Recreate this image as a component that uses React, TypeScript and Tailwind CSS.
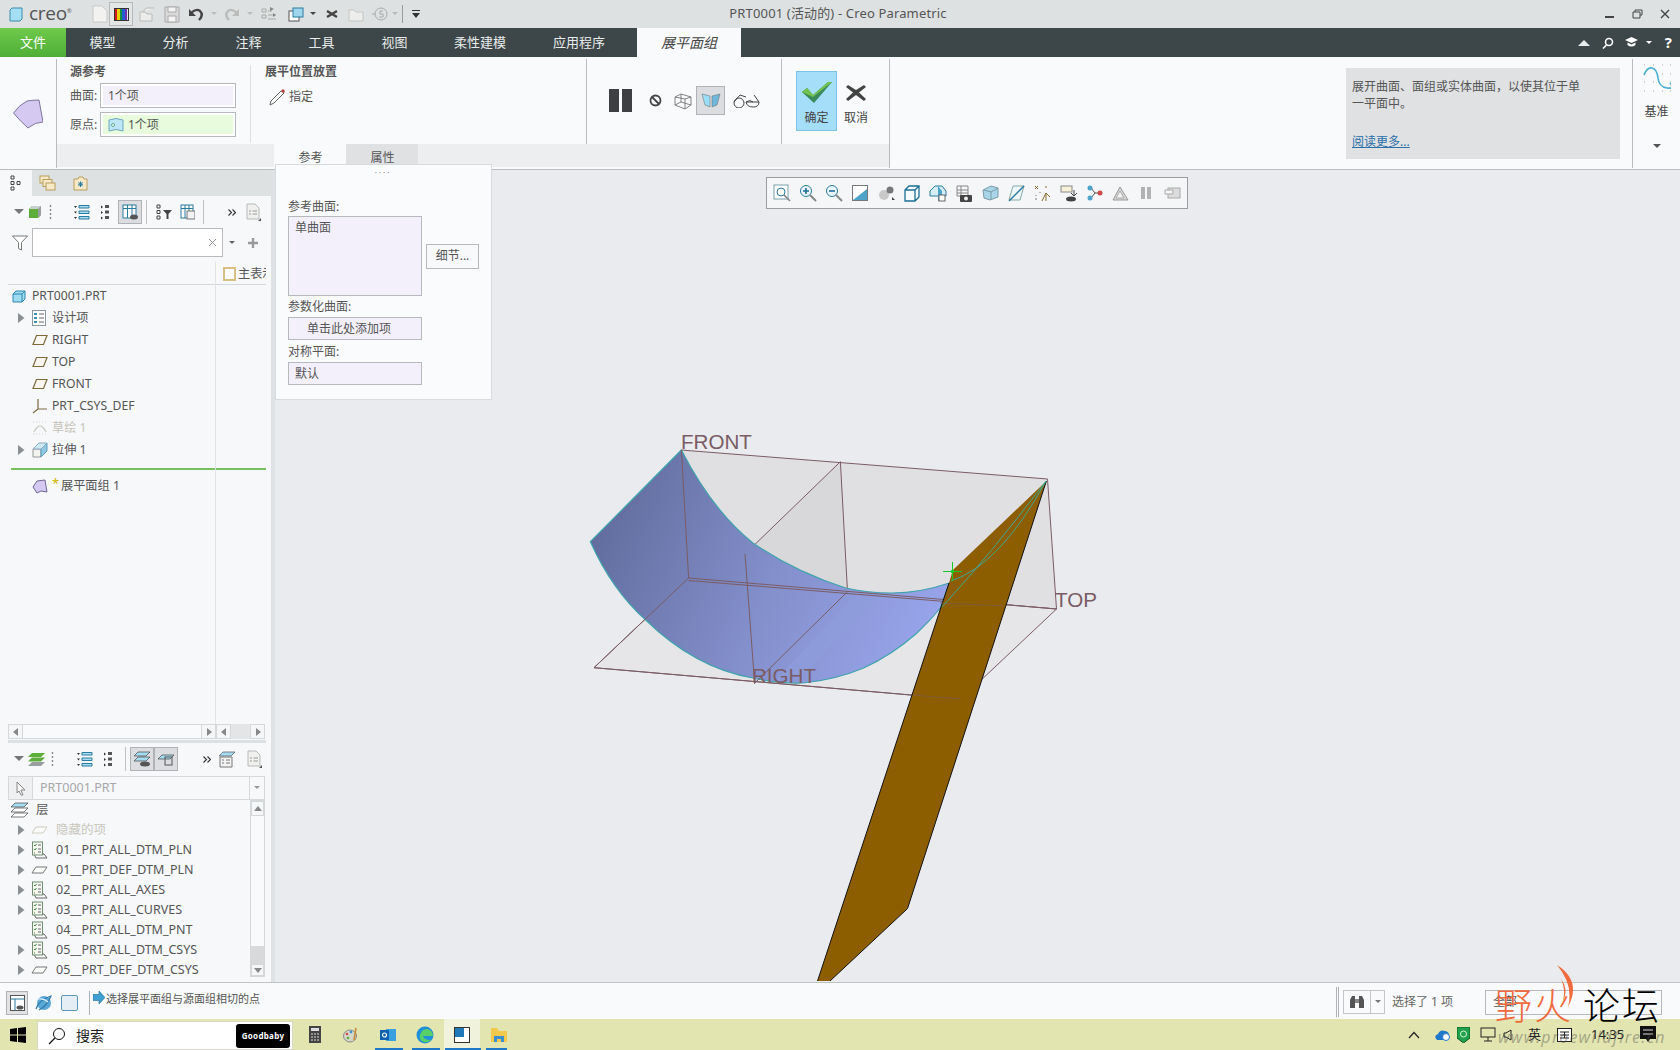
import type { ReactNode } from 'react';

const S = ({ w = 16, h = 16, children, className = '' }: { w?: number; h?: number; children?: ReactNode; className?: string }) => (
  <svg width={w} height={h} viewBox={`0 0 ${w} ${h}`} fill="none" className={`shrink-0 block ${className}`}>
    {children}
  </svg>
);

const Caret = ({ color = '#666', size = 4 }: { color?: string; size?: number }) => (
  <S w={size * 2} h={size + 1}>
    <path d={`M0 0H${size * 2}L${size} ${size}Z`} fill={color} />
  </S>
);

const Arrow = () => (
  <S w={8} h={12}>
    <path d="M1 1V11L7.5 6Z" fill="#8b8f92" />
  </S>
);

const PlaneIcon = () => (
  <S w={16} h={14}>
    <path d="M4.5 2.5H15L11.5 11.5H1Z" fill="#f8f6ef" stroke="#7d6a3c" strokeWidth="1.2" />
  </S>
);

const LayerDoc = () => (
  <S w={17} h={18}>
    <path d="M3 13H13L16 17H5Z" fill="#fff" stroke="#666" />
    <rect x="1.5" y="1" width="10" height="13" fill="#f7f7ef" stroke="#6f8d70" />
    <path d="M3 4l1 1 1.5-2M3 8l1 1 1.5-2M3 12h1" stroke="#3b8a4b" />
    <path d="M7 4h3M7 8h3M7 11h3" stroke="#667" />
  </S>
);

const LayerFlat = ({ faded = false }: { faded?: boolean }) => (
  <S w={17} h={8}>
    <path d="M5 1H16L12 7H1Z" fill="#fdfdfb" stroke={faded ? '#cfccbe' : '#777'} />
  </S>
);

const ListLines = () => (
  <S w={16} h={16}>
    <path d="M5 1.5H15V4H5ZM5 7H15V9.5H5ZM5 12.5H15V15H5Z" fill="#a6dcf2" stroke="#2a7ba0" />
    <path d="M0 2H3L1.5 4ZM0 7.5H3L1.5 9.5ZM0 13H3L1.5 15Z" fill="#333" />
  </S>
);

const ListDots = () => (
  <S w={9} h={16}>
    <path d="M4 1h4v3H4zM4 6.5h4v3H4zM4 12h4v3H4z" fill="#555" />
    <path d="M0 1.5L2 3 0 4.5ZM0 7L2 8.5 0 10ZM0 12.5L2 14 0 15.5Z" fill="#333" />
  </S>
);

const DocIcon = () => (
  <S w={15} h={18}>
    <path d="M1 1H9L13 5V16H1Z" fill="#f0f0ee" stroke="#b8b8b8" />
    <path d="M3 8h2M6.5 8H11M3 11h2M6.5 11H11" stroke="#9a9a9a" />
    <path d="M15 15V18H12Z" fill="#555" />
  </S>
);

const Chevrons = () => (
  <S w={8} h={7}>
    <path d="M0.5 0.5l3 3-3 3M4.5 0.5l3 3-3 3" stroke="#333" strokeWidth="1.1" />
  </S>
);

const CubeBlue = () => (
  <S w={14} h={13}>
    <path d="M1 4L4 1H13V9L10 12H1Z" fill="#9fdcf2" stroke="#2c86ad" />
    <path d="M1 4H10V12M10 4L13 1" stroke="#2c86ad" />
  </S>
);

const PurplePatch = () => (
  <svg width={30} height={30} viewBox="0 0 30 30" className="shrink-0 block">
    <path d="M0.5 14Q6 6 14 2Q20 1 26 1Q28 12 30 23Q22 23 15 29Q7 22 0.5 14Z" fill="#d5c9f2" stroke="#7e7699" strokeWidth="1" />
  </svg>
);

const QuickBar = () => (
  <div className="flex items-center">
    <S w={16} h={18} className="ml-[21px]">
      <path d="M1 1H10L15 6V17H1Z" fill="#f2f2f0" stroke="#c9c9c9" />
    </S>
    <div className="ml-[1px] w-[24px] h-[24px] border border-[#b6b9ba] bg-[#e4e6e6] flex items-center justify-center">
      <div className="w-[15px] h-[13px] flex border border-[#333]">
        <div className="flex-1 bg-[#d01818]" />
        <div className="flex-1 bg-[#e6d000]" />
        <div className="flex-1 bg-[#109040]" />
        <div className="flex-1 bg-[#2060d0]" />
        <div className="flex-1 bg-[#7030b0]" />
      </div>
    </div>
    <S w={17} h={17} className="ml-[6px]">
      <path d="M1 6H6L8 8H13V15H1ZM4 6L7 2H15" fill="#ececea" stroke="#bbb" />
    </S>
    <S w={16} h={17} className="ml-[8px]">
      <path d="M1 1H15V16H1Z" fill="#d9d9d9" stroke="#aaa" />
      <path d="M4 1H12V6H4ZM4 10H12V16H4Z" fill="#f4f4f4" stroke="#aaa" />
    </S>
    <S w={16} h={14} className="ml-[8px]">
      <path d="M3 6Q8 1 12 4Q16 8 11 13" stroke="#444" strokeWidth="2.4" />
      <path d="M1 2V9H8Z" fill="#444" />
    </S>
    <div className="ml-[7px]"><Caret color="#bbb" size={3} /></div>
    <S w={16} h={14} className="ml-[7px]">
      <path d="M13 6Q8 1 4 4Q0 8 5 13" stroke="#bbb" strokeWidth="2.4" />
      <path d="M15 2V9H8Z" fill="#bbb" />
    </S>
    <div className="ml-[7px]"><Caret color="#bbb" size={3} /></div>
    <S w={16} h={16} className="ml-[8px]">
      <path d="M1 3h4v3H1zM1 9h4v3H1zM7 13h8M7 9h8M7 5h4" stroke="#aaa" />
      <path d="M9 1l4 2-4 2zM12 7l3 2-3 2z" fill="#888" />
    </S>
    <S w={16} h={16} className="ml-[11px]">
      <rect x="1" y="5" width="10" height="10" fill="#fff" stroke="#555" />
      <rect x="5" y="2" width="10" height="9" fill="#9fd6ee" stroke="#2a7ba0" />
    </S>
    <div className="ml-[6px]"><Caret color="#444" size={3} /></div>
    <S w={12} h={12} className="ml-[10px]">
      <path d="M1 3L11 9M1 9L11 3" stroke="#444" strokeWidth="2.4" />
    </S>
    <S w={16} h={15} className="ml-[10px]">
      <path d="M1 3H6L8 5H15V14H1Z" fill="#ededeb" stroke="#c6c6c6" />
    </S>
    <S w={16} h={16} className="ml-[8px]">
      <path d="M0 8h3" stroke="#aaa" />
      <circle cx="9" cy="8" r="6" stroke="#aaa" />
      <path d="M11 5H8V8H11V11H7" stroke="#aaa" />
    </S>
    <div className="ml-[4px]"><Caret color="#bbb" size={3} /></div>
    <div className="ml-[4px] w-px h-[18px] bg-[#9a9d9f]" />
    <S w={8} h={8} className="ml-[9px]">
      <path d="M0 0H8V1H0ZM0 3H8L4 8Z" fill="#333" />
    </S>
  </div>
);

const TitleBar = () => (
  <div className="h-[28px] bg-[#dde1e1] grid grid-cols-[1fr_auto_1fr] items-center">
    <div className="flex items-center">
      <S w={14} h={15} className="ml-[9px]">
        <path d="M1 3L3 1H13V12L11 14H1Z" fill="#a5dff3" stroke="#3a8cb0" />
      </S>
      <span className="ml-[6px] w-[42px] text-[19px] leading-none text-[#555] tracking-[-0.3px] font-['Open_Sans',sans-serif] mt-[-2px]">
        creo<span className="text-[6px] align-super">®</span>
      </span>
      <QuickBar />
    </div>
    <div className="text-[13px] text-[#555] mr-[4px] tracking-[0.15px]">PRT0001 (活动的) - Creo Parametric</div>
    <div className="flex justify-end items-center pr-[10px] gap-[17px]">
      <S w={10} h={10}><path d="M0 8H9" stroke="#444" strokeWidth="2" /></S>
      <S w={11} h={10}>
        <path d="M3 3V1H10V6H8M1 3H8V9H1Z" stroke="#444" />
      </S>
      <S w={10} h={10}><path d="M1 1L9 9M9 1L1 9" stroke="#444" strokeWidth="1.4" /></S>
    </div>
  </div>
);

const NavBar = () => (
  <div className="h-[29px] bg-[#3d4648] flex text-[13px] text-[#e8ecec] leading-[29px]">
    <div className="w-[66px] text-center bg-gradient-to-b from-[#6fca4a] to-[#4fae38] text-white">文件</div>
    {['模型', '分析', '注释', '工具', '视图'].map((t) => (
      <div key={t} className="w-[73px] text-center">{t}</div>
    ))}
    <div className="w-[98px] text-center">柔性建模</div>
    <div className="w-[108px] pl-[24px]">应用程序</div>
    <div className="w-[104px] text-center bg-[#f8fafb] text-[#444] italic text-[14px]">展平面组</div>
    <div className="ml-auto flex items-center pr-[8px]">
      <S w={12} h={7}><path d="M0 7L6 1L12 7Z" fill="#e8ecec" /></S>
      <S w={12} h={12} className="ml-[12px]">
        <circle cx="7" cy="5" r="3.5" stroke="#fff" strokeWidth="1.6" />
        <path d="M4.5 8L1 11.5" stroke="#fff" strokeWidth="1.6" />
      </S>
      <S w={13} h={11} className="ml-[11px]">
        <path d="M0 3L6.5 0L13 3L6.5 6Z" fill="#fff" />
        <path d="M2.5 5.5V8Q6.5 11 10.5 8V5.5L6.5 7.5Z" fill="#fff" />
      </S>
      <div className="ml-[8px]"><Caret color="#fff" size={3} /></div>
      <span className="ml-[13px] text-[15px] font-bold text-white">?</span>
    </div>
  </div>
);

const FieldRow = ({ label, bg, children }: { label: string; bg: string; children: ReactNode }) => (
  <div className="flex items-center h-[25px]">
    <span className="w-[30px] text-[12px] text-[#555]">{label}</span>
    <div className="w-[136px] h-[25px] border border-[#b7babc] p-[2px] bg-white">
      <div className={`h-full flex items-center px-[5px] text-[12px] text-[#555] ${bg}`}>{children}</div>
    </div>
  </div>
);

const Ribbon = () => (
  <div className="h-[113px] bg-[#f8fafb] border-b border-[#b9bdbf] flex">
    <div className="w-[56px] shrink-0 flex items-center justify-center pt-[1px]">
      <PurplePatch />
    </div>
    <div className="w-[834px] shrink-0 border-x border-[#b9bdbf] mt-[2px] mb-[1px] flex flex-col">
      <div className="h-[86px] flex">
        <div className="w-[193px] pl-[13px] pt-[5px]">
          <div className="text-[12px] font-bold text-[#555] leading-[16px]">源参考</div>
          <div className="mt-[3px] flex flex-col gap-[4px]">
            <FieldRow label="曲面:" bg="bg-[#f3f0fc]">1个项</FieldRow>
            <FieldRow label="原点:" bg="bg-[#e8fbdc]">
              <S w={16} h={15} className="mr-[4px]">
                <path d="M1 3Q8 0 15 3V14Q8 11 1 14Z" fill="#bfe6f7" stroke="#6fa8c0" />
                <circle cx="5" cy="8" r="1.5" fill="#fff" stroke="#5a8" />
              </S>
              1个项
            </FieldRow>
          </div>
        </div>
        <div className="w-[336px] border-l border-[#dde0e2] h-[78px] mt-[6px] pl-[14px]">
          <div className="text-[12px] font-bold text-[#555] leading-[16px] mt-[-1px]">展平位置放置</div>
          <div className="flex items-center mt-[8px] ml-[4px] text-[12px] text-[#555]">
            <S w={17} h={17}>
              <path d="M2 12L12 2L15 4L5 14L1 16Z" fill="#fff" stroke="#666" />
              <path d="M12 2L15 4L16 2L14 0Z" fill="#b3413c" />
            </S>
            <span className="ml-[3px]">指定</span>
          </div>
        </div>
        <div className="w-[195px] border-l border-[#b9bdbf] flex items-center pb-[2px]">
          <div className="ml-[22px] flex gap-[3px]">
            <div className="w-[10px] h-[23px] bg-[#3d3f42]" />
            <div className="w-[10px] h-[23px] bg-[#3d3f42]" />
          </div>
          <S w={13} h={13} className="ml-[17px]">
            <circle cx="6.5" cy="6.5" r="5" stroke="#444" strokeWidth="1.8" />
            <path d="M3 3L10 10" stroke="#444" strokeWidth="1.8" />
          </S>
          <S w={20} h={18} className="ml-[11px]">
            <path d="M2 5L8 2L18 5V13L12 17L2 13ZM8 2V10L2 13M8 10L18 13M12 7V17M2 5L12 7L18 5" stroke="#777" strokeWidth="0.9" />
          </S>
          <div className="ml-[3px] w-[29px] h-[29px] bg-[#dcdde0] border border-[#b0b2b5] flex items-center justify-center">
            <S w={20} h={15}>
              <path d="M1 1L9 3V14L4 12Z" fill="#9bdcf6" stroke="#666" strokeWidth="0.5" />
              <path d="M11 3L19 1L16 12L11 14Z" fill="#6fb8dc" stroke="#666" strokeWidth="0.5" />
            </S>
          </div>
          <S w={28} h={15} className="ml-[7px]">
            <circle cx="7" cy="10" r="5" stroke="#444" />
            <path d="M2 9L8 2L14 4M14 9Q18 6 21 9M22 2L27 9" stroke="#444" />
            <path d="M14 9H27Q27 14 21 14Q15 14 14 9Z" stroke="#444" />
          </S>
        </div>
        <div className="w-[108px] border-l border-[#b9bdbf] flex">
          <div className="ml-[14px] mt-[12px] w-[41px] h-[60px] bg-[#a5def9] border border-[#7cc4e6] flex flex-col items-center text-[12px] text-[#444]">
            <S w={30} h={23} className="mt-[9px]">
              <path d="M0 11L5 7L11 14L26 1L30 1L12 22Z" fill="#3a8a5c" />
              <path d="M0 11L5 7L11 14L26 1L30 1L11 16Z" fill="#72c24f" />
            </S>
            <span className="mt-[6px] leading-[16px]">确定</span>
          </div>
          <div className="ml-[6px] mt-[12px] flex flex-col items-center text-[12px] text-[#444] w-[26px]">
            <S w={20} h={17} className="mt-[13px]">
              <path d="M2 1L10 6L18 1L20 3L13 8.5L20 15L18 17L10 11L2 17L0 15L7 8.5L0 3Z" fill="#444" />
            </S>
            <span className="mt-[9px] leading-[16px]">取消</span>
          </div>
        </div>
      </div>
      <div className="mt-auto h-[23px] bg-[#eceef0] flex pl-[217px] text-[12px] text-[#555] leading-[28px] mb-[1px]">
        <div className="w-[72px] bg-[#f8fafb] text-center pl-[1px]">参考</div>
        <div className="w-[72px] bg-[#dfe1e3] text-center pl-[1px]">属性</div>
      </div>
    </div>
    <div className="w-[742px] shrink-0 flex justify-end">
      <div className="w-[274px] h-[91px] mt-[11px] mr-[12px] bg-[#dfe1e3] px-[6px] pt-[10px] text-[12px] leading-[17px] text-[#555]">
        <div className="w-[232px]">展开曲面、面组或实体曲面，以使其位于单一平面中。</div>
        <div className="mt-[21px] text-[#2a6fa8] underline">阅读更多...</div>
      </div>
    </div>
    <div className="flex-1 border-l border-[#b9bdbf] mt-[2px] mb-[1px] flex flex-col items-center text-[12px] text-[#444]">
      <S w={28} h={28} className="mt-[5px]">
        <path d="M1 1h.5M10 1h.5M19 1h.5M27 1h.5M1 10h.5M19 10h.5M27 10h.5M1 18h.5M10 18h.5M27 18h.5M1 27h.5M10 27h.5M19 27h.5M27 27h.5" stroke="#555" />
        <path d="M1 11Q4 3 9 4T15 14T24 24T27 19" stroke="#4ab0d8" strokeWidth="1.6" />
      </S>
      <span className="mt-[12px] leading-[16px]">基准</span>
      <div className="mt-[24px]"><Caret color="#555" /></div>
    </div>
  </div>
);

const ToolBtn = ({ children, active = false }: { children: ReactNode; active?: boolean }) => (
  <div className={`w-[24px] h-[24px] flex items-center justify-center ${active ? 'bg-[#dcdde0] border border-[#b0b2b5]' : ''}`}>{children}</div>
);

const treeRows: { text: string; arrow?: boolean; icon: ReactNode; faded?: boolean }[] = [
  {
    text: '设计项',
    arrow: true,
    icon: (
      <S w={14} h={16}>
        <rect x="0.5" y="0.5" width="13" height="15" fill="#fff" stroke="#8a9aa0" />
        <path d="M2 3h3v2H2zM2 7h3v2H2zM2 11h3v2H2z" fill="#3a8fb8" />
        <path d="M7 4h5M7 8h5M7 12h5" stroke="#666" />
      </S>
    ),
  },
  { text: 'RIGHT', icon: <PlaneIcon /> },
  { text: 'TOP', icon: <PlaneIcon /> },
  { text: 'FRONT', icon: <PlaneIcon /> },
  {
    text: 'PRT_CSYS_DEF',
    icon: (
      <S w={16} h={16}>
        <path d="M6 1V11L1 15M6 11H15" stroke="#7d6a3c" strokeWidth="1.2" />
      </S>
    ),
  },
  {
    text: '草绘 1',
    faded: true,
    icon: (
      <S w={16} h={14}>
        <path d="M2 11Q8 -1 14 11" stroke="#c6c4b8" strokeWidth="1.2" />
        <path d="M1 1h14M1 13h14" stroke="#d8d6cc" strokeDasharray="1 2" />
      </S>
    ),
  },
  {
    text: '拉伸 1',
    arrow: true,
    icon: (
      <S w={16} h={16}>
        <path d="M1 7H9V15H1Z" fill="#f3f3f0" stroke="#999" />
        <path d="M9 7L15 1V9L9 15Z" fill="#8fc8e0" stroke="#5a9ab8" />
        <path d="M1 7L7 1H15L9 7Z" fill="#cfe9f5" stroke="#8ab" />
      </S>
    ),
  },
];

const layerRows: { text: string; arrow: boolean; flat?: boolean; faded?: boolean }[] = [
  { text: '隐藏的项', arrow: true, flat: true, faded: true },
  { text: '01__PRT_ALL_DTM_PLN', arrow: true },
  { text: '01__PRT_DEF_DTM_PLN', arrow: true, flat: true },
  { text: '02__PRT_ALL_AXES', arrow: true },
  { text: '03__PRT_ALL_CURVES', arrow: true },
  { text: '04__PRT_ALL_DTM_PNT', arrow: false },
  { text: '05__PRT_ALL_DTM_CSYS', arrow: true },
  { text: '05__PRT_DEF_DTM_CSYS', arrow: true, flat: true },
];

const ScrollBtn = ({ dir, w = 15 }: { dir: 'l' | 'r' | 'u' | 'd'; w?: number }) => (
  <div style={{ width: w }} className="h-full flex items-center justify-center bg-[#f4f6f7] border border-[#d5d8da]">
    <S w={8} h={8}>
      {dir === 'l' && <path d="M6 0V8L1 4Z" fill="#888" />}
      {dir === 'r' && <path d="M2 0V8L7 4Z" fill="#888" />}
      {dir === 'u' && <path d="M0 6H8L4 1Z" fill="#888" />}
      {dir === 'd' && <path d="M0 2H8L4 7Z" fill="#888" />}
    </S>
  </div>
);

const LeftPanel = () => (
  <div className="w-[271px] shrink-0 bg-[#f6f8fa] flex flex-col text-[12.5px] text-[#555]">
    <div className="h-[26px] bg-[#dde1e1] flex items-center">
      <div className="w-[32px] h-full bg-[#f6f8fa] flex items-center justify-center">
        <S w={12} h={16}>
          <path d="M1 1h3v3H1zM1 6.5h3v3H1zM1 12h3v3H1zM7 6.5h3v3H7z" stroke="#444" />
        </S>
      </div>
      <S w={17} h={16} className="ml-[7px]">
        <rect x="1" y="1" width="9" height="7" fill="#f6e9c8" stroke="#b99d5a" />
        <rect x="4" y="4.5" width="9" height="7" fill="#f6e9c8" stroke="#b99d5a" />
        <rect x="7" y="8" width="9" height="7" fill="#f6e9c8" stroke="#b99d5a" />
      </S>
      <S w={15} h={15} className="ml-[17px]">
        <path d="M1 3H5L6 1H10L11 3H14V14H1Z" fill="#f6e9c8" stroke="#b99d5a" />
        <path d="M7.5 5.5V11M5 8.2H10M5.5 6.2L9.5 10.2M9.5 6.2L5.5 10.2" stroke="#2a7ba0" />
      </S>
    </div>

    <div className="mt-[4px] h-[24px] flex items-center pl-[14px]">
      <Caret color="#777" size={5} />
      <S w={14} h={14} className="ml-[4px]">
        <path d="M1 4L4 1H13V10L10 13H1Z" fill="#5cad3a" />
        <path d="M10 4V13L13 10V1Z" fill="#9a9d9f" />
        <path d="M1 4H10L13 1H4Z" fill="#c9d0d0" />
      </S>
      <S w={3} h={14} className="ml-[7px]"><path d="M1.5 0V14" stroke="#888" strokeDasharray="2 2" strokeWidth="1.4" /></S>
      <div className="ml-[22px]"><ListLines /></div>
      <div className="ml-[11px]"><ListDots /></div>
      <div className="ml-[8px]">
        <ToolBtn active>
          <S w={16} h={16}>
            <rect x="1" y="1" width="13" height="13" fill="#fff" stroke="#2a7ba0" />
            <path d="M1 4.5H14M5.5 1V14M10 1V14" stroke="#2a7ba0" />
            <ellipse cx="12" cy="13" rx="4" ry="2.5" fill="#555" />
          </S>
        </ToolBtn>
      </div>
      <div className="ml-[4px] w-px h-[24px] bg-[#bfc2c4]" />
      <S w={16} h={16} className="ml-[9px]">
        <path d="M1 1h3v3H1zM1 6.5h3v3H1zM1 12h3v3H1z" stroke="#444" />
        <path d="M7 6H16L12.5 10V15H10.5V10Z" fill="#444" />
      </S>
      <S w={15} h={16} className="ml-[8px]">
        <rect x="1" y="1" width="12" height="13" fill="#fff" stroke="#2a7ba0" />
        <path d="M1 4.5H13M5 1V14M9 1V8" stroke="#2a7ba0" />
        <rect x="7" y="7" width="8" height="8" fill="#f2f2f2" stroke="#777" />
      </S>
      <div className="ml-[8px] w-px h-[24px] bg-[#bfc2c4]" />
      <div className="ml-[24px]"><Chevrons /></div>
      <div className="ml-[10px]"><DocIcon /></div>
    </div>

    <div className="mt-[4px] h-[29px] flex items-center pl-[12px]">
      <S w={16} h={16}>
        <path d="M0.5 1H15.5L9.5 7.5V15L6.5 13.5V7.5Z" fill="#fff" stroke="#777" />
      </S>
      <div className="ml-[4px] w-[191px] h-[29px] bg-white border border-[#b7babc] flex items-center justify-end pr-[5px]">
        <S w={9} h={9}><path d="M1 1L8 8M8 1L1 8" stroke="#999" /></S>
      </div>
      <div className="ml-[6px]"><Caret color="#666" size={3} /></div>
      <S w={12} h={12} className="ml-[12px]"><path d="M6 1V11M1 6H11" stroke="#999" strokeWidth="2.4" /></S>
    </div>

    <div className="mt-[5px] h-[462px] ml-[8px] mr-[5px] flex text-[12.2px]">
      <div className="w-[207px] shrink-0">
        <div className="h-[23px] border-b border-[#d5d8da]" />
        <div className="h-[22px] flex items-center pl-[4px]">
          <CubeBlue />
          <span className="ml-[6px]">PRT0001.PRT</span>
        </div>
        {treeRows.map((r) => (
          <div key={r.text} className={`h-[22px] flex items-center ${r.faded ? 'text-[#c6c4b8]' : ''}`}>
            <div className="w-[24px] pl-[9px]">{r.arrow && <Arrow />}</div>
            <div className="w-[20px]">{r.icon}</div>
            <span>{r.text}</span>
          </div>
        ))}
        <div className="mt-[7px] h-[2px] bg-[#7ac060] ml-[3px]" />
        <div className="mt-[5px] h-[22px] flex items-center">
          <div className="w-[24px]" />
          <div className="w-[20px]">
            <S w={16} h={15}><path d="M1 8L5 2L13 1L15 13L9 12L5 14Z" fill="#d5c9f2" stroke="#6f6790" /></S>
          </div>
          <span className="text-[#d8b400] text-[13px] leading-none mt-[-6px] w-[9px]">*</span>
          <span>展平面组 1</span>
        </div>
      </div>
      <div className="flex-1 min-w-0 border-l border-[#e2e4e6]">
        <div className="h-[23px] border-b border-[#d5d8da] flex items-center pl-[7px] pt-[2px] overflow-hidden whitespace-nowrap">
          <S w={13} h={14} className="mr-[2px]">
            <rect x="1" y="1" width="11" height="12" fill="#fff" stroke="#d9bf83" strokeWidth="2" />
          </S>
          主表示
        </div>
        <div className="mt-[183px] h-[2px] bg-[#7ac060]" />
      </div>
    </div>

    <div className="h-[15px] ml-[8px] mr-[5px] flex">
      <ScrollBtn dir="l" />
      <div className="w-[178px] border-y border-[#d5d8da] bg-[#f8fafb]" />
      <ScrollBtn dir="r" />
      <ScrollBtn dir="l" />
      <div className="w-[19px] bg-[#e3e5e7]" />
      <ScrollBtn dir="r" />
    </div>
    <div className="mt-[1px] ml-[8px] mr-[5px] h-[3px] bg-[#dde0e3]" />

    <div className="mt-[4px] h-[24px] flex items-center pl-[14px]">
      <Caret color="#777" size={5} />
      <S w={17} h={15} className="ml-[4px]">
        <path d="M4 1H17L13 5H0Z" fill="#5cad3a" />
        <path d="M4 5.5H17L13 9.5H0Z" fill="#5cad3a" />
        <path d="M4 10H17L13 14H0Z" fill="#9a9d9f" />
      </S>
      <S w={3} h={14} className="ml-[6px]"><path d="M1.5 0V14" stroke="#888" strokeDasharray="2 2" strokeWidth="1.4" /></S>
      <div className="ml-[23px]"><ListLines /></div>
      <div className="ml-[11px]"><ListDots /></div>
      <div className="ml-[12px] w-px h-[24px] bg-[#bfc2c4]" />
      <div className="ml-[4px] flex">
        <ToolBtn active>
          <S w={17} h={16}>
            <path d="M4 1H16L12 5H0ZM4 6H16L12 10H0Z" fill="#a6dcf2" stroke="#444" strokeWidth="0.7" />
            <ellipse cx="11" cy="13" rx="5" ry="2.5" fill="#555" />
          </S>
        </ToolBtn>
        <ToolBtn active>
          <S w={17} h={16}>
            <path d="M4 4H16L12 8H0Z" fill="#a6dcf2" stroke="#444" strokeWidth="0.7" />
            <rect x="7" y="6" width="7" height="8" fill="none" stroke="#555" />
          </S>
        </ToolBtn>
      </div>
      <div className="ml-[25px]"><Chevrons /></div>
      <S w={17} h={17} className="ml-[8px]">
        <path d="M4 1H16L12 5H0Z" fill="#a6dcf2" stroke="#555" strokeWidth="0.7" />
        <path d="M1 6H13V16H1Z" fill="#f3f3f3" stroke="#777" />
        <path d="M3 9h2M7 9h4M3 12h2M7 12h4" stroke="#777" />
      </S>
      <div className="ml-[11px]"><DocIcon /></div>
    </div>

    <div className="mt-[5px] ml-[8px] mr-[6px] h-[24px] border border-[#d5d8da] flex items-center text-[#a8a8a8]">
      <div className="w-[24px] h-full border-r border-[#d5d8da] bg-[#eef0f2] flex items-center justify-center">
        <S w={10} h={15}><path d="M1 1L9 9H5L7 14H5L3 10L1 12Z" fill="#f4f4f4" stroke="#888" /></S>
      </div>
      <span className="ml-[7px] flex-1">PRT0001.PRT</span>
      <div className="w-[15px] h-full border-l border-[#d5d8da] flex items-center justify-center"><Caret color="#999" size={3} /></div>
    </div>

    <div className="ml-[8px] mr-[6px] flex h-[180px]">
      <div className="flex-1">
        <div className="h-[20px] flex items-center pl-[3px]">
          <S w={17} h={16}>
            <path d="M4 1H17L13 5H0Z" fill="#a6dcf2" stroke="#444" strokeWidth="0.7" />
            <path d="M4 6H17L13 10H0ZM4 11H17L13 15H0Z" fill="#fff" stroke="#444" strokeWidth="0.7" />
          </S>
          <span className="ml-[8px]">层</span>
        </div>
        {layerRows.map((r) => (
          <div key={r.text} className={`h-[20px] flex items-center ${r.faded ? 'text-[#c9c7ba]' : ''}`}>
            <div className="w-[23px] pl-[9px]">{r.arrow && <Arrow />}</div>
            <div className="w-[25px]">{r.flat ? <LayerFlat faded={r.faded} /> : <LayerDoc />}</div>
            <span>{r.text}</span>
          </div>
        ))}
      </div>
      <div className="w-[15px] h-[177px] flex flex-col border border-[#d5d8da]">
        <div className="h-[15px]"><ScrollBtn dir="u" w={13} /></div>
        <div className="h-[130px] bg-[#f8fafb]" />
        <div className="h-[18px] bg-[#d8d9da]" />
        <div className="h-[12px] flex-1"><ScrollBtn dir="d" w={13} /></div>
      </div>
    </div>
  </div>
);

const PopupLabel = ({ children }: { children: ReactNode }) => <div className="leading-[16px]">{children}</div>;

const RefPopup = () => (
  <div className="absolute left-[275px] top-[-6px] z-10 w-[217px] h-[236px] bg-[#fafbfd] border border-[#d8dadd] text-[12px] text-[#555] pl-[12px]">
    <div className="text-center text-[#888] text-[8px] leading-[12px] tracking-[2px] pr-[13px] mt-[2px]">····</div>
    <div className="mt-[20px]"><PopupLabel>参考曲面:</PopupLabel></div>
    <div className="flex items-center mt-[1px]">
      <div className="w-[134px] h-[80px] bg-[#f3f0fc] border border-[#b7babc] px-[6px] py-[2px] leading-[18px]">单曲面</div>
      <div className="ml-[4px] w-[53px] h-[25px] bg-[#f8f9fb] border border-[#b7babc] flex items-center justify-center">细节...</div>
    </div>
    <div className="mt-[3px]"><PopupLabel>参数化曲面:</PopupLabel></div>
    <div className="mt-[2px] w-[134px] h-[23px] bg-[#f3f0fc] border border-[#b7babc] flex items-center pl-[18px]">单击此处添加项</div>
    <div className="mt-[4px]"><PopupLabel>对称平面:</PopupLabel></div>
    <div className="mt-[2px] w-[134px] h-[23px] bg-[#f3f0fc] border border-[#b7babc] flex items-center pl-[6px]">默认</div>
  </div>
);

const Glass = ({ mark }: { mark?: string }) => (
  <S w={18} h={18}>
    <circle cx="7" cy="7" r="5.5" fill="#eaf6fb" stroke="#2a7ba0" />
    <path d="M11 11L17 17" stroke="#888" strokeWidth="2" />
    {mark && <path d={mark} stroke="#1d6f98" strokeWidth="1.6" />}
  </S>
);

const viewIcons: ReactNode[] = [
  <S w={18} h={18} key="1">
    <rect x="1" y="1" width="14" height="14" fill="#fff" stroke="#7ca0b0" />
    <circle cx="8" cy="8" r="4" stroke="#2a7ba0" />
    <path d="M11 11L17 17" stroke="#888" strokeWidth="1.6" />
  </S>,
  <Glass key="2" mark="M4 7H10M7 4V10" />,
  <Glass key="3" mark="M4 7H10" />,
  <S w={16} h={16} key="4">
    <rect x="0.5" y="0.5" width="15" height="15" fill="#fff" stroke="#777" />
    <path d="M1 15L15 4V15Z" fill="#4da3c8" />
  </S>,
  <S w={18} h={16} key="5">
    <circle cx="7" cy="10" r="5" fill="#c9c9c9" />
    <circle cx="13" cy="5" r="3.5" fill="#777" />
    <path d="M15 13v3h3Z" fill="#444" transform="translate(0 -1)" />
  </S>,
  <S w={17} h={17} key="6">
    <path d="M1 5L5 1H15V12L11 16H1ZM1 5H11V16M11 5L15 1" fill="#f6fbfd" stroke="#1d6f98" strokeWidth="1.3" />
  </S>,
  <S w={18} h={17} key="7">
    <path d="M1 6L6 1H13L17 6V11H1Z" fill="#d5eef8" stroke="#2a7ba0" />
    <path d="M9 1L13 6V16H9Z" fill="#4da3c8" />
    <rect x="10" y="10" width="6" height="6" fill="#fff" stroke="#666" />
  </S>,
  <S w={16} h={17} key="8">
    <path d="M1 1H12V11H1ZM1 5H12M1 8H12M5 1V11" stroke="#888" />
    <rect x="4" y="10" width="12" height="7" rx="1" fill="#444" />
    <circle cx="10" cy="13.5" r="2" fill="#eee" />
  </S>,
  <S w={17} h={16} key="9">
    <path d="M1 5L9 1L16 3V12L8 15L2 13Z" fill="#a8d6e8" stroke="#7a9aa8" />
    <path d="M2 5L9 7L16 3M9 7V15" stroke="#7a9aa8" />
  </S>,
  <S w={17} h={17} key="10">
    <path d="M5 1H16L12 15H1Z" fill="#eef6fa" stroke="#8aa" />
    <path d="M1 16L16 1" stroke="#2a7ba0" strokeWidth="1.4" />
  </S>,
  <S w={18} h={18} key="11">
    <path d="M2 2L5 5M5 2L2 5M13 2v2M9 17L13 9L17 13M13 9V17" stroke="#8a6d2c" />
    <path d="M3 11v1M3 14v2M7 8v1" stroke="#777" />
  </S>,
  <S w={17} h={17} key="12">
    <rect x="1" y="1" width="11" height="6" fill="#f6f1d8" stroke="#888" />
    <path d="M14 5V10M11 8L14 11L17 8" stroke="#444" />
    <ellipse cx="11" cy="14" rx="5" ry="2.5" fill="#444" />
  </S>,
  <S w={17} h={16} key="13">
    <path d="M5 3L9 8L5 13M9 8H14" stroke="#555" />
    <circle cx="4" cy="3" r="2.5" fill="#4da3c8" />
    <circle cx="4" cy="13" r="2.5" fill="#4da3c8" />
    <circle cx="14" cy="8" r="2.5" fill="#d04a4a" />
  </S>,
  <S w={17} h={15} key="14">
    <path d="M8 1L16 14H1Z" fill="#d8d8d8" stroke="#999" />
    <path d="M8 5L12 12H4Z" fill="#f3f3f3" stroke="#aaa" />
  </S>,
  <S w={12} h={12} key="15">
    <rect x="1" y="0" width="4" height="12" fill="#b2b2b2" />
    <rect x="7" y="0" width="4" height="12" fill="#b2b2b2" />
  </S>,
  <S w={17} h={13} key="16">
    <rect x="4" y="1" width="12" height="10" fill="#dcdcdc" stroke="#aaa" />
    <path d="M1 3H9V7H1Z" fill="#f4f4f4" stroke="#aaa" />
  </S>,
];

const ViewToolbar = () => (
  <div className="absolute left-[491px] top-[7px] w-[422px] h-[32px] bg-[#f4f6f7] border border-[#9a9d9f] flex items-center pl-[2px]">
    {viewIcons.map((ic, i) => (
      <div key={i} className="w-[26px] flex justify-center">{ic}</div>
    ))}
  </div>
);

const line = '#7a5c64';

const Scene = () => (
  <svg viewBox="275 170 1405 812" className="absolute inset-0 w-full h-full">
    <defs>
      <linearGradient id="surf" x1="590" y1="500" x2="930" y2="640" gradientUnits="userSpaceOnUse">
        <stop offset="0" stopColor="#5f6a9a" />
        <stop offset="0.55" stopColor="#8490cc" />
        <stop offset="1" stopColor="#97a4ea" />
      </linearGradient>
    </defs>
    <path d="M681 450L1047.5 479L1056.5 609L688.6 578Z" fill="#e0e0e2" stroke={line} />
    <path d="M688.6 578L1056.5 609L960.7 699.3L594 667.7Z" fill="#e6e6e8" stroke={line} />
    <path d="M840.4 461.7L745 554L754.6 683.3L847.5 591.7Z" fill="#d8d7d9" stroke={line} />
    <path
      d="M681.4 450L590.4 541.7Q612 590 645.7 620Q695 668 752.9 678Q780 684 802.9 683Q835 680 863.6 668Q892 655 917 633Q930 621 940.4 608L949.3 583Q920 593 892 593Q868 593 845.7 588Q795 572 752.9 543Q712 510 681.4 450Z"
      fill="url(#surf)"
      stroke="#3fa3ad"
      strokeWidth="1.2"
    />
    <path d="M853 597L875 598L805 673L775 681Z" fill="#8f9cdc" opacity="0.7" />
    <path d="M688.6 578L1056.5 609M688.6 580.5L1000 606M745 554L754.6 683.3M847.5 591.7L754.6 683.3M681.4 450L688.6 578M594 667.7L688.6 578" stroke={line} fill="none" />
    <path d="M594 667.7L960.7 699.3" stroke={line} />
    <path d="M1046.4 481L952.9 570L949 583L817.5 981H830L907.5 908.6Z" fill="#8c5e00" />
    <path d="M1046.4 481L907.5 908.6L830 981M949 583L817.5 981" stroke="#111" strokeWidth="1" fill="none" />
    <path d="M940 603L1005 606M913 695L961 699" stroke="#7a5c64" opacity="0.55" fill="none" />
    <path d="M951 581Q1000 565 1046 481M942 607Q990 555 1046 481" stroke="#38b09a" strokeWidth="0.9" fill="none" />
    <path d="M943 571.5H962M952.5 562V581" stroke="#18c828" strokeWidth="1" />
    <circle cx="952.5" cy="571.5" r="1.8" fill="#18c828" />
    <g fill={line} fontSize="20.6" fontFamily="'Liberation Sans',sans-serif">
      <text x="681" y="449">FRONT</text>
      <text x="1055" y="607">TOP</text>
      <text x="752" y="683">RIGHT</text>
    </g>
  </svg>
);

const StatusBar = () => (
  <div className="h-[37px] bg-[#f8fafb] border-t border-[#c0c3c5] flex items-center text-[#555]">
    <div className="ml-[6px] w-[22px] h-[24px] bg-[#e0e2e4] border border-[#b0b2b5] flex items-center justify-center mt-[3px]">
      <S w={15} h={16}>
        <rect x="0.5" y="0.5" width="14" height="15" fill="#fff" stroke="#555" />
        <path d="M0.5 4H14.5M5 4V15" stroke="#2a7ba0" />
        <ellipse cx="10" cy="12.5" rx="3.5" ry="2" fill="#555" />
      </S>
    </div>
    <S w={18} h={18} className="ml-[7px] mt-[3px]">
      <ellipse cx="9" cy="9" rx="7" ry="7" fill="#5aa8d8" />
      <path d="M1 15Q4 6 16 2Q12 12 4 16" stroke="#2f78a8" strokeWidth="1.2" />
      <path d="M3 5Q9 4 13 8" stroke="#d8eefa" strokeWidth="1.2" />
    </S>
    <div className="ml-[8px] mt-[3px] w-[17px] h-[16px] bg-[#e4eef4] border border-[#5a9ab8] rounded-[2px]" />
    <div className="ml-[11px] mt-[3px] w-px h-[24px] bg-[#b0b2b5]" />
    <S w={12} h={13} className="ml-[3px] mb-[8px]">
      <path d="M0 3.5H6V0L12 6.5L6 13V9.5H0Z" fill="#3f9fd0" stroke="#1d6f98" strokeWidth="0.6" />
    </S>
    <span className="ml-[1px] mb-[4px] text-[11px]">选择展平面组与源面组相切的点</span>
    <div className="ml-auto flex items-center mt-[2px] h-[30px]">
      <div className="w-px h-[30px] bg-[#b0b2b5]" />
      <div className="ml-[1px] w-px h-[30px] bg-[#b0b2b5]" />
      <div className="ml-[4px] w-[42px] h-[24px] border border-[#c3c6c8] flex items-center">
        <div className="w-[27px] h-full flex items-center justify-center border-r border-[#c3c6c8]">
          <S w={16} h={14}>
            <path d="M1 5L3 1H6V13H1ZM10 1H13L15 5V13H10Z" fill="#555" />
            <rect x="6" y="4" width="4" height="4" fill="#888" />
          </S>
        </div>
        <div className="flex-1 flex justify-center"><Caret color="#777" size={3} /></div>
      </div>
      <span className="ml-[7px] w-[93px] text-[12px] text-[#666]">选择了 1 项</span>
      <div className="w-[177px] h-[25px] border border-[#b7babc] flex items-center pl-[7px] text-[12px]">全部</div>
      <div className="w-[18px]" />
    </div>
  </div>
);

const Taskbar = () => (
  <div className="h-[31px] bg-[#e2e5b0] flex items-center text-[#222]">
    <div className="w-[36px] flex justify-center">
      <S w={16} h={16}>
        <path d="M0 2L7 1V7.5H0ZM8 1L16 0V7.5H8ZM0 8.5H7V15L0 14ZM8 8.5H16V16L8 15Z" fill="#000" />
      </S>
    </div>
    <div className="ml-[1px] w-[256px] h-[29px] mt-[2px] bg-white border border-[#d8d8c8] flex items-center">
      <S w={18} h={18} className="ml-[10px]">
        <circle cx="11" cy="7" r="5.5" stroke="#111" />
        <path d="M7 11L1 17" stroke="#111" strokeWidth="1.2" />
      </S>
      <span className="ml-[10px] text-[14px]">搜索</span>
      <div className="ml-auto mr-[2px] w-[54px] h-[24px] rounded-[3px] bg-black text-white text-[8px] font-bold flex items-center justify-center tracking-[0.3px]">Goodbaby</div>
    </div>
    <div className="relative h-full flex items-center">
      <S w={12} h={17} className="ml-[16px]">
        <rect width="12" height="17" fill="#444" />
        <rect x="2" y="2" width="8" height="3" fill="#ddd" />
        <path d="M2 8h2M5 8h2M8 8h2M2 11h2M5 11h2M8 11h2M2 14h2M5 14h2M8 14h2" stroke="#ddd" />
      </S>
      <S w={16} h={16} className="ml-[22px]">
        <ellipse cx="7" cy="9" rx="6.5" ry="6" fill="#d5d8c8" stroke="#888" />
        <circle cx="4" cy="7" r="1.3" fill="#d04a4a" />
        <circle cx="8" cy="5" r="1.3" fill="#3a8fd0" />
        <circle cx="5" cy="11" r="1.3" fill="#5cad3a" />
        <path d="M13 1L11 13" stroke="#c78a3a" strokeWidth="1.6" />
      </S>
      <S w={16} h={16} className="ml-[21px]">
        <rect x="6" y="2" width="10" height="12" fill="#3aa0e0" />
        <rect y="3" width="9" height="10" fill="#0f62b0" />
        <circle cx="4.5" cy="8" r="2" stroke="#fff" strokeWidth="1.2" />
      </S>
      <S w={18} h={18} className="ml-[20px]">
        <circle cx="9" cy="9" r="8.5" fill="#1f8fd8" />
        <path d="M4 9Q6 2 12 3Q17 5 17 10H7Q8 14 15 14Q10 18 6 15Q3 13 4 9Z" fill="#57d06a" />
      </S>
      <div className="ml-[10px] w-[36px] h-[31px] bg-[#f1f2dc] flex items-center justify-center">
        <div className="w-[16px] h-[16px] border border-[#333] bg-white">
          <div className="w-[9px] h-[9px] bg-[#1f78b8]" />
        </div>
      </div>
      <S w={16} h={15} className="ml-[11px]">
        <path d="M0 1H6L8 4H16V15H0Z" fill="#f2c94c" />
        <path d="M3 9H13V15H10V12H6V15H3Z" fill="#3a8fd0" />
      </S>
      <div className="absolute bottom-0 left-[82px] w-[28px] h-[2px] bg-[#1f78c8]" />
      <div className="absolute bottom-0 left-[119px] w-[28px] h-[2px] bg-[#1f78c8]" />
      <div className="absolute bottom-0 left-[152px] w-[36px] h-[2px] bg-[#1f78c8]" />
      <div className="absolute bottom-0 left-[193px] w-[21px] h-[2px] bg-[#1f78c8]" />
    </div>
    <div className="ml-auto flex items-center pr-[24px] text-[13px]">
      <S w={12} h={8}><path d="M1 7L6 1.5L11 7" stroke="#222" strokeWidth="1.2" /></S>
      <S w={17} h={13} className="ml-[14px]">
        <path d="M3 12Q-1 8 4 6Q6 1 11 3Q16 4 15 9L13 12Z" fill="#1f78c8" />
        <circle cx="12" cy="9" r="3.5" fill="#fff" stroke="#1f78c8" />
      </S>
      <S w={13} h={16} className="ml-[6px]">
        <path d="M0 0H13V11L6.5 16L0 11Z" fill="#1fa04a" stroke="#0c5a28" />
        <circle cx="6.5" cy="7" r="3" stroke="#d8f4d8" />
      </S>
      <S w={16} h={15} className="ml-[10px]">
        <rect x="1" y="1" width="14" height="9" stroke="#222" />
        <path d="M8 10V14M4 14H12" stroke="#222" />
      </S>
      <S w={9} h={12} className="ml-[7px]"><path d="M8 1L3 4H1V8H3L8 11Z" stroke="#222" /></S>
      <span className="ml-[16px] w-[14px]">英</span>
      <S w={15} h={14} className="ml-[15px]">
        <rect x="0.5" y="0.5" width="14" height="13" fill="#fff" stroke="#222" />
        <path d="M3 4H12M3 7H12M7.5 4V10M3 10H12" stroke="#222" />
      </S>
      <span className="ml-[19px] w-[40px] text-[13px]">14:35</span>
      <S w={16} h={17} className="ml-[9px]">
        <path d="M0 0H16V13H10L8 16L6 13H0Z" fill="#111" />
        <path d="M3 4H13M3 8H13" stroke="#ddd" />
      </S>
    </div>
  </div>
);

const Watermark = () => (
  <div className="absolute left-[1495px] top-[984px] z-20 w-[180px] h-[66px]">
    <div className="flex items-center h-[40px] font-['Noto_Sans_CJK_SC',sans-serif]">
      <span className="text-[37px] leading-none text-[#ef6a3c] font-light w-[78px] tracking-[2px]">野火</span>
      <span className="ml-[10px] text-[37px] leading-none text-black font-light tracking-[2px]">论坛</span>
    </div>
    <svg width="26" height="42" viewBox="0 0 26 42" className="absolute left-[59px] top-[-19px]">
      <path d="M3 0Q28 16 14 42Q20 20 3 0Z" fill="#ef6a3c" />
      <path d="M7 14Q15 24 9 36Q12 24 7 14Z" fill="#ef6a3c" />
    </svg>
    <div className="absolute left-[3px] top-[41px] text-[16px] italic tracking-[1.3px] text-[#444]/40 whitespace-nowrap">www.proewildfire.cn</div>
  </div>
);

export default function App() {
  return (
    <div className="relative w-[1680px] h-[1050px] overflow-hidden flex flex-col font-['Noto_Sans','Noto_Sans_CJK_SC',sans-serif] bg-[#e9ebee]">
      <TitleBar />
      <NavBar />
      <Ribbon />
      <div className="relative h-[812px] flex">
        <LeftPanel />
        <div className="w-[4px] bg-[#dfe2e5]" />
        <div className="relative flex-1 bg-[#e9ebee] overflow-hidden">
          <Scene />
          <ViewToolbar />
        </div>
        <RefPopup />
      </div>
      <StatusBar />
      <Taskbar />
      <Watermark />
    </div>
  );
}
